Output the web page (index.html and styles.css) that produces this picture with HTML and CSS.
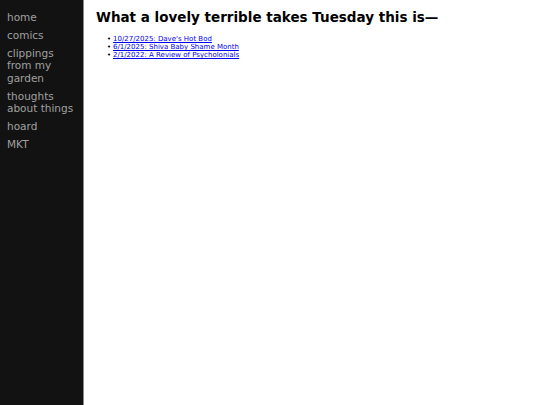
FILE: index.html
```html
<!DOCTYPE html>
<html>
<head>
<meta charset="utf-8">
<link rel="stylesheet" href="styles.css">
</head>
<body>
<nav class="side">
  <a class="nav-item" href="#">home</a>
  <a class="nav-item" href="#">comics</a>
  <a class="nav-item" href="#">clippings from my garden</a>
  <a class="nav-item" href="#">thoughts about things</a>
  <a class="nav-item" href="#">hoard</a>
  <a class="nav-item" href="#">MKT</a>
</nav>
<main class="main">
  <h1 class="title">What a lovely terrible takes Tuesday this is—</h1>
  <ul class="posts">
    <li><a href="#">10/27/2025: Dave's Hot Bod</a></li>
    <li><a href="#">6/1/2025: Shiva Baby Shame Month</a></li>
    <li><a href="#">2/1/2022: A Review of Psycholonials</a></li>
  </ul>
</main>
</body>
</html>
```
FILE: styles.css
```css
html, body {
  margin: 0;
  padding: 0;
  height: 100%;
}
body {
  display: flex;
  font-family: "DejaVu Sans", sans-serif;
  background: #fff;
}
.side {
  width: 84px;
  flex: none;
  background: #121212;
  border-right: 1px solid #888;
  box-sizing: border-box;
  padding: 11px 4px 0 7px;
  display: flex;
  flex-direction: column;
  gap: 5.6px;
}
.nav-item {
  color: #a0a0a0;
  text-decoration: none;
  font-size: 10.5px;
  line-height: 12.4px;
}
.main {
  padding: 9px 12px;
}
.title {
  font-size: 13.5px;
  font-weight: bold;
  margin: 0 0 10px 0;
  color: #000;
  line-height: 16px;
}
.posts {
  margin: 0;
  padding-left: 11px;
  list-style: none;
  font-size: 7px;
  line-height: 8px;
}
.posts li::before {
  content: "•";
  display: inline-block;
  width: 6px;
  color: #000;
}
.posts a {
  color: #0000ee;
}
```
